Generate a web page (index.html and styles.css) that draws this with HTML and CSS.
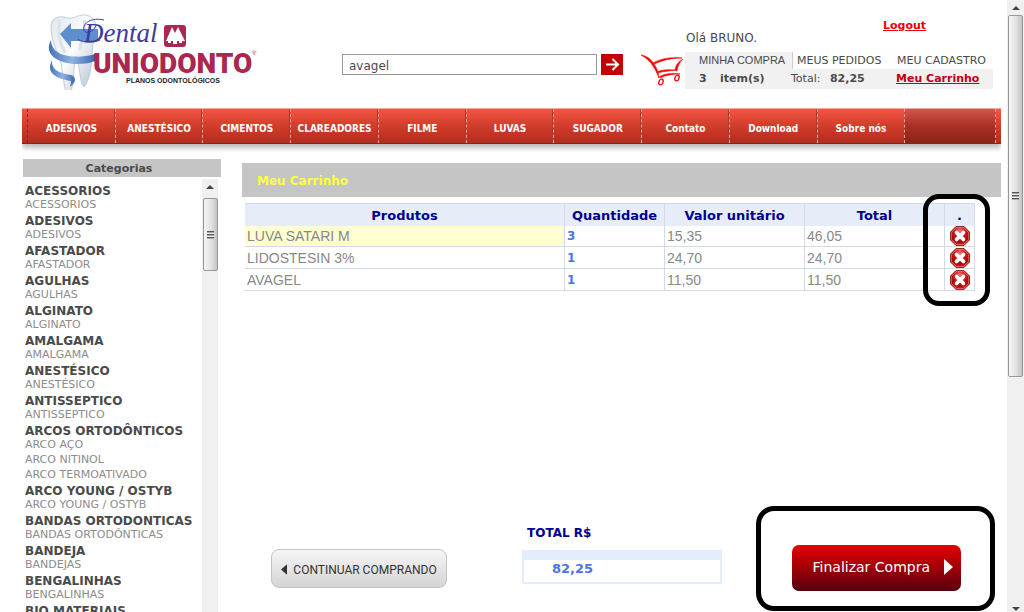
FILE: index.html
```html
<!DOCTYPE html>
<html lang="pt-BR">
<head>
<meta charset="utf-8">
<title>Dental Uniodonto - Meu Carrinho</title>
<link rel="stylesheet" href="styles.css">
</head>
<body>
<svg class="defs" aria-hidden="true">
  <defs>
    <linearGradient id="tooth" x1="0" y1="0" x2="1" y2="1">
      <stop offset="0" stop-color="#dfe6ee"/><stop offset=".45" stop-color="#fbfcfd"/><stop offset="1" stop-color="#a9b8c9"/>
    </linearGradient>
    <linearGradient id="band" x1="0" y1="0" x2="1" y2="0">
      <stop offset="0" stop-color="#4474b8"/><stop offset=".5" stop-color="#8fb2e2"/><stop offset="1" stop-color="#3c69ae"/>
    </linearGradient>
    <radialGradient id="stop" cx=".5" cy=".25" r=".8">
      <stop offset="0" stop-color="#f0777a"/><stop offset=".4" stop-color="#cc1414"/><stop offset=".7" stop-color="#a00808"/><stop offset="1" stop-color="#ff3a30"/>
    </radialGradient>
    <symbol id="remove" viewBox="0 0 20 20">
      <path d="M6 .5h8L19.500 6v8L14 19.500H6L.5 14V6z" fill="url(#stop)" stroke="#8f2a2a"/>
      <path d="M6.500 1.500h7l5 5v7l-5 5h-7l-5-5v-7z" fill="none" stroke="#e88" stroke-opacity=".6"/>
      <path d="M6.600 6.600l6.800 6.800M13.400 6.600l-6.800 6.800" stroke="#fff" stroke-width="3.800" stroke-linecap="round"/>
    </symbol>
  </defs>
</svg>
<div class="page">
  <header class="header">
    <a class="logo" href="#" aria-label="Dental Uniodonto">
      <svg width="214" height="78" viewBox="46 12 214 78">
        <path d="M51 26c0-7 6-10 13-9 6 2 10 1 14-1 8-3 18 0 18 13-1 9-4 15-4 26 0 12-3 27-8 32-4-2-4-20-8-31-3 10-2 31-7 43-5-4-6-30-9-40-5-12-9-20-9-33z" fill="url(#tooth)" stroke="#c3ced9"/>
        <path d="M60 20c-3 12 0 24 5 33M84 20c3 9-3 17-4 30" fill="none" stroke="#dbe2ea" stroke-width="3"/>
        <path d="M60 34l11-11v6h27v12H71v7z" fill="#5f8ecf"/>
        <path d="M51 40c-7 12 3 23 26 24 8 0 14-1 18-3v-7c-16 5-35 3-41-5-2-3-3-6-3-9z" fill="url(#band)"/>
        <path d="M52 60c-6 12 2 18 19 21l-1 6c8-6 5-11 1-12-13-2-20-6-19-15z" fill="url(#band)"/>
        <text class="logo-script" x="84" y="42">Dental</text>
        <path d="M104 20c-12-3-22 3-20 10 1 4 8 3 12-4M100 40c-8 4-20 2-22-1" fill="none" stroke="#3c3c9c"/>
        <rect x="164" y="25" width="22" height="22" rx="3" fill="#aa2850"/>
        <path d="M166 41l6-14 3 6 3-6 7 14h-3v2h-3v-2h-2v3h-4v-3h-2v2h-3v-2z" fill="#fff"/>
        <text class="logo-name" x="93" y="73">UNIODONTO</text>
        <text class="logo-mark" x="252" y="55">®</text>
        <text class="logo-tag" x="126" y="83">PLANOS ODONTOLÓGICOS</text>
      </svg>
    </a>
    <form class="search">
      <input class="search-text" type="text" value="avagel" aria-label="Buscar produtos">
      <button class="search-go" type="button" aria-label="Buscar">
        <svg width="22" height="21" viewBox="0 0 22 21"><path d="M5 10.500h12M11.500 5l5.500 5.500-5.500 5.500" fill="none" stroke="#fff" stroke-width="2"/></svg>
      </button>
    </form>
    <svg class="cart" width="44" height="34" viewBox="640 53 44 34" aria-hidden="true">
      <path d="M641 55c6 1 10 4 13 9 3 4 4 8 5 14-2-5-4-9-6-12-3-5-7-8-12-11z" fill="#f00" stroke="#f00" stroke-width=".6"/>
      <path d="M653 63c9-5 18-6 29-5-10 0-19 2-28 6zM683 59c-4 4-5 7-6 12l-2-1c1-5 3-8 8-11z" fill="#f00" stroke="#f00" stroke-width=".6"/>
      <path d="M657 72c7-3 13-2 20-2-7 1-13 1-19 3zM659 77c6-4 14-4 21-3-7 0-14 1-20 4z" fill="#f00" stroke="#f00" stroke-width=".6"/>
      <ellipse cx="661" cy="82" rx="2" ry="3" transform="rotate(20 661 82)" fill="none" stroke="#f00" stroke-width="1.300"/>
      <ellipse cx="677" cy="78" rx="2" ry="3" transform="rotate(20 677 78)" fill="none" stroke="#f00" stroke-width="1.300"/>
    </svg>
    <div class="account">
      <div class="greeting"><span class="hello">Olá BRUNO.</span><a class="logout" href="#">Logout</a></div>
      <nav class="tabs" aria-label="Conta">
        <a class="tab tab-current" href="#">MINHA COMPRA</a><a class="tab" href="#">MEUS PEDIDOS</a><a class="tab tab-last" href="#">MEU CADASTRO</a>
      </nav>
      <div class="summary"><b class="count">3</b><b class="items">item(s)</b><span class="sum">Total: <b>82,25</b></span><a class="cart-link" href="#">Meu Carrinho</a></div>
    </div>
  </header>

  <nav class="menu" aria-label="Principal">
    <a href="#">ADESIVOS</a><a href="#">ANESTÉSICO</a><a href="#">CIMENTOS</a><a href="#">CLAREADORES</a><a href="#">FILME</a><a href="#">LUVAS</a><a href="#">SUGADOR</a><a href="#">Contato</a><a href="#">Download</a><a href="#">Sobre nós</a><span class="menu-rest"></span>
  </nav>

  <div class="columns">
    <aside class="sidebar">
      <h2 class="sidebar-title">Categorias</h2>
      <div class="sidebar-body">
        <div class="categories">
          <h3>ACESSORIOS</h3><a href="#">ACESSORIOS</a>
          <h3>ADESIVOS</h3><a href="#">ADESIVOS</a>
          <h3>AFASTADOR</h3><a href="#">AFASTADOR</a>
          <h3>AGULHAS</h3><a href="#">AGULHAS</a>
          <h3>ALGINATO</h3><a href="#">ALGINATO</a>
          <h3>AMALGAMA</h3><a href="#">AMALGAMA</a>
          <h3>ANESTÉSICO</h3><a href="#">ANESTÉSICO</a>
          <h3>ANTISSEPTICO</h3><a href="#">ANTISSEPTICO</a>
          <h3>ARCOS ORTODÔNTICOS</h3><a href="#">ARCO AÇO</a><a href="#">ARCO NITINOL</a><a href="#">ARCO TERMOATIVADO</a>
          <h3>ARCO YOUNG / OSTYB</h3><a href="#">ARCO YOUNG / OSTYB</a>
          <h3>BANDAS ORTODONTICAS</h3><a href="#">BANDAS ORTODÔNTICAS</a>
          <h3>BANDEJA</h3><a href="#">BANDEJAS</a>
          <h3>BENGALINHAS</h3><a href="#">BENGALINHAS</a>
          <h3>BIO MATERIAIS</h3>
        </div>
        <div class="scroll scroll-list" aria-hidden="true"><span class="arrow arrow-up"></span><span class="thumb thumb-list"><i class="grip"></i></span></div>
      </div>
    </aside>

    <main class="main">
      <h1 class="main-title">Meu Carrinho</h1>
      <div class="cart-area">
        <table class="items-table">
          <colgroup><col class="c-product"><col class="c-qty"><col class="c-price"><col class="c-price"><col class="c-remove"></colgroup>
          <thead><tr><th>Produtos</th><th>Quantidade</th><th>Valor unitário</th><th>Total</th><th>.</th></tr></thead>
          <tbody>
            <tr><td class="picked">LUVA SATARI M</td><td class="qty">3</td><td>15,35</td><td>46,05</td><td class="act"><button type="button" aria-label="Remover LUVA SATARI M"><svg width="20" height="20"><use href="#remove"/></svg></button></td></tr>
            <tr><td>LIDOSTESIN 3%</td><td class="qty">1</td><td>24,70</td><td>24,70</td><td class="act"><button type="button" aria-label="Remover LIDOSTESIN 3%"><svg width="20" height="20"><use href="#remove"/></svg></button></td></tr>
            <tr><td>AVAGEL</td><td class="qty">1</td><td>11,50</td><td>11,50</td><td class="act"><button type="button" aria-label="Remover AVAGEL"><svg width="20" height="20"><use href="#remove"/></svg></button></td></tr>
          </tbody>
        </table>
        <div class="mark-remove"></div>
      </div>
      <div class="checkout">
        <button class="continue" type="button"><svg width="6" height="11" viewBox="0 0 7 12"><path d="M7 0v12L0 6z" fill="#333"/></svg>CONTINUAR COMPRANDO</button>
        <div class="total">
          <div class="total-label">TOTAL R$</div>
          <div class="total-box">82,25</div>
        </div>
        <div class="mark-finish">
          <button class="finish" type="button">Finalizar Compra<svg width="9" height="16" viewBox="0 0 9 16"><path d="M0 0v16l9-8z" fill="#fff"/></svg></button>
        </div>
      </div>
    </main>
  </div>
</div>
<div class="scroll scroll-page" aria-hidden="true"><span class="arrow arrow-up"></span><span class="thumb thumb-page"><i class="grip"></i></span><span class="arrow arrow-down"></span></div>
</body>
</html>
```
FILE: styles.css
```css
* { box-sizing: border-box; }
body {
  margin: 0;
  height: 100vh;
  overflow: hidden;
  display: flex;
  background: #fff;
  color: #4a4a4a;
  font: 11px/16px Verdana, "DejaVu Sans", sans-serif;
}
a { color: inherit; text-decoration: none; }
button { margin: 0; padding: 0; border: 0; background: none; cursor: pointer; }
svg { display: block; }
h1, h2, h3 { margin: 0; }
.defs { position: absolute; width: 0; height: 0; }

.page { flex: 1; min-width: 0; display: flex; flex-direction: column; padding: 0 5px 0 22px; }

/* header */
.header { display: flex; height: 108px; flex: none; padding-left: 24px; }
.logo { width: 296px; padding-top: 12px; flex: none; }
.logo-script { font: italic 27px "Liberation Serif", serif; fill: #3c3c9c; }
.logo-name { font: 900 28px Roboto, sans-serif; fill: #aa2850; }
.logo-mark { font: 6px "Liberation Sans", sans-serif; fill: #aa2850; }
.logo-tag { font: bold 7px "Liberation Sans", sans-serif; fill: #222; }
.search { display: flex; flex: 1; gap: 4px; padding-top: 54px; height: 75px; }
.search-text {
  flex: 1;
  min-width: 0;
  height: 21px;
  border: 1px solid #999;
  border-radius: 0;
  padding: 2px 6px 0;
  color: #4a4a4a;
  font: 12px "DejaVu Sans", sans-serif;
}
.search-go { width: 22px; height: 21px; background: #c40000; }
.cart { margin: 53px 1px 0 17px; flex: none; }
.account { width: 308px; margin-right: 9px; flex: none; }
.greeting { display: flex; height: 52px; font-size: 12px; }
.hello { width: 198px; padding: 30px 0 0 1px; }
.logout { padding-top: 18px; color: #e8000c; font-weight: bold; font-size: 11px; text-decoration: underline; }
.tabs { display: flex; height: 17px; line-height: 17px; }
.tab { flex: none; width: 100px; padding-left: 4px; white-space: nowrap; }
.tab-current { width: 108px; padding-left: 14px; background: #f1f1f1; border-right: 1px solid #ccc; font-family: "Liberation Sans", sans-serif; }
.summary { display: flex; height: 20px; padding-left: 14px; line-height: 19px; background: #f1f1f1; white-space: nowrap; }
.count { width: 21px; }
.items { width: 71px; }
.sum { width: 105px; }
.sum b { padding-left: 6px; }
.cart-link { color: #c00010; font-weight: bold; text-decoration: underline; }

/* red menu */
.menu {
  display: flex;
  flex: none;
  height: 36px;
  margin-right: 1px;
  padding: 0 5px;
  border-top: 1px solid #f4a79b;
  border-bottom: 1px solid #84271b;
  background: linear-gradient(#f25643, #d23c2a 50%, #b22d1e);
  box-shadow: 0 4px 5px #bbb;
  clip-path: inset(0 0 -8px 0);
}
.menu a {
  flex: 88;
  min-width: 0;
  border-left: 1px dashed #eda89f;
  color: #fff;
  font: bold 10px/40px "DejaVu Sans Condensed", "DejaVu Sans", sans-serif;
  text-align: center;
  white-space: nowrap;
}
.menu a:first-child { border-left-color: #8c2418; }
.menu a + a { box-shadow: -1px 0 #a8392c; }
.menu-rest { flex: 91; border: 1px dashed #eda89f; border-width: 0 1px; background: linear-gradient(#d3554a, #a83024 50%, #8c2418); }

.columns { display: flex; flex: 1; min-height: 0; padding: 15px 1px 0; gap: 21px; }

/* categories */
.sidebar { width: 198px; flex: none; display: flex; flex-direction: column; min-height: 0; }
.sidebar-title { height: 18px; background: #c5c5c5; font-size: 11px; line-height: 19px; text-align: center; padding-right: 6px; }
.sidebar-body { display: flex; flex: 1; min-height: 0; margin-right: 3px; padding-top: 2px; }
.categories { flex: 1; min-width: 0; padding: 3px 0 0 2px; overflow: hidden; white-space: nowrap; }
.categories h3 { height: 15px; font-size: 12px; line-height: 19px; }
.categories a { display: block; color: #8c8c8c; font-size: 11px; line-height: 15px; }

/* scroll bars */
.scroll { display: flex; flex-direction: column; align-items: center; flex: none; background: #f0f0f0; }
.scroll-list { width: 16px; }
.scroll-page { width: 17px; }
.arrow { border: 4px solid transparent; }
.arrow-up { border-bottom-color: #444; border-top-width: 0; margin: 6px 0 5px; }
.arrow-down { border-top-color: #444; border-bottom-width: 0; margin: auto 0 1px; }
.thumb {
  width: 15px;
  display: flex;
  align-items: center;
  justify-content: center;
  border: 1px solid #979797;
  border-radius: 2px;
  background: linear-gradient(90deg, #f5f5f5, #e4e4e6 50%, #c4c4c8);
}
.thumb-list { height: 73px; margin-top: 4px; }
.thumb-page { height: 362px; }
.grip { width: 7px; height: 8px; background: repeating-linear-gradient(#555 0 1px, #aaa 1px 2px, #eee 2px 3px); }

/* cart */
.main { flex: 1; min-width: 0; display: flex; flex-direction: column; padding-top: 4px; }
.main-title { height: 34px; padding-left: 15px; background: #c5c5c5; color: #ffff40; font-size: 12px; line-height: 36px; }
.cart-area { position: relative; margin: 6px 26px 0 3px; }
.items-table { width: 100%; table-layout: fixed; border-collapse: collapse; color: #888; font: 14px/20px "Liberation Sans", sans-serif; }
.c-qty { width: 100px; }
.c-price { width: 140px; }
.c-remove { width: 30px; }
.items-table th { height: 22px; padding: 2px 0 0; background: #e6edf8; border: 1px solid #d2d9e8; border-bottom: 0; color: #000090; font: bold 13px/19px Verdana, "DejaVu Sans", sans-serif; }
.items-table th:first-child, .items-table td:first-child { border-left: 0; }
.items-table td { height: 22px; padding: 0 2px; border: 1px solid #d2d9e8; }
.items-table tbody tr:first-child td { height: 21px; border-top: 0; }
.items-table .picked { background: #ffffd0; }
.items-table .qty { color: #4a74e8; font: bold 12px/20px Verdana, "DejaVu Sans", sans-serif; }
.items-table .act { padding: 0; }
.act button { display: block; margin: 0 auto; }
.mark-remove { position: absolute; top: -9px; right: -15px; bottom: -15px; width: 67px; border: 5px solid #000; border-radius: 16px; pointer-events: none; }

/* checkout */
.checkout { display: flex; align-items: flex-start; margin: auto 6px 1px 29px; }
.continue {
  display: flex;
  align-items: center;
  justify-content: center;
  gap: 6px;
  width: 176px;
  height: 39px;
  margin-top: 43px;
  padding-top: 2px;
  border: 1px solid #c4c4c4;
  border-radius: 8px;
  background: linear-gradient(#f6f6f6, #d4d4d4);
  color: #333;
  font: 12px Roboto, sans-serif;
  white-space: nowrap;
}
.total { width: 200px; margin: 19px auto 0 75px; font-weight: bold; font-size: 12px; }
.total-label { padding-left: 5px; color: #000090; }
.total-box { height: 34px; margin-top: 9px; padding-left: 28px; border: 2px solid #e2edfd; border-top-width: 10px; color: #4a74e8; font-size: 13px; line-height: 18px; }
.mark-finish { padding: 34px 29px 15px 31px; border: 5px solid #000; border-radius: 18px; }
.finish {
  display: flex;
  align-items: center;
  justify-content: flex-end;
  gap: 14px;
  width: 169px;
  height: 46px;
  padding: 0 8px 2px 0;
  border-radius: 7px;
  background: linear-gradient(#e60000, #58000f);
  color: #fff;
  font: 14px "DejaVu Sans", sans-serif;
  white-space: nowrap;
}
```
